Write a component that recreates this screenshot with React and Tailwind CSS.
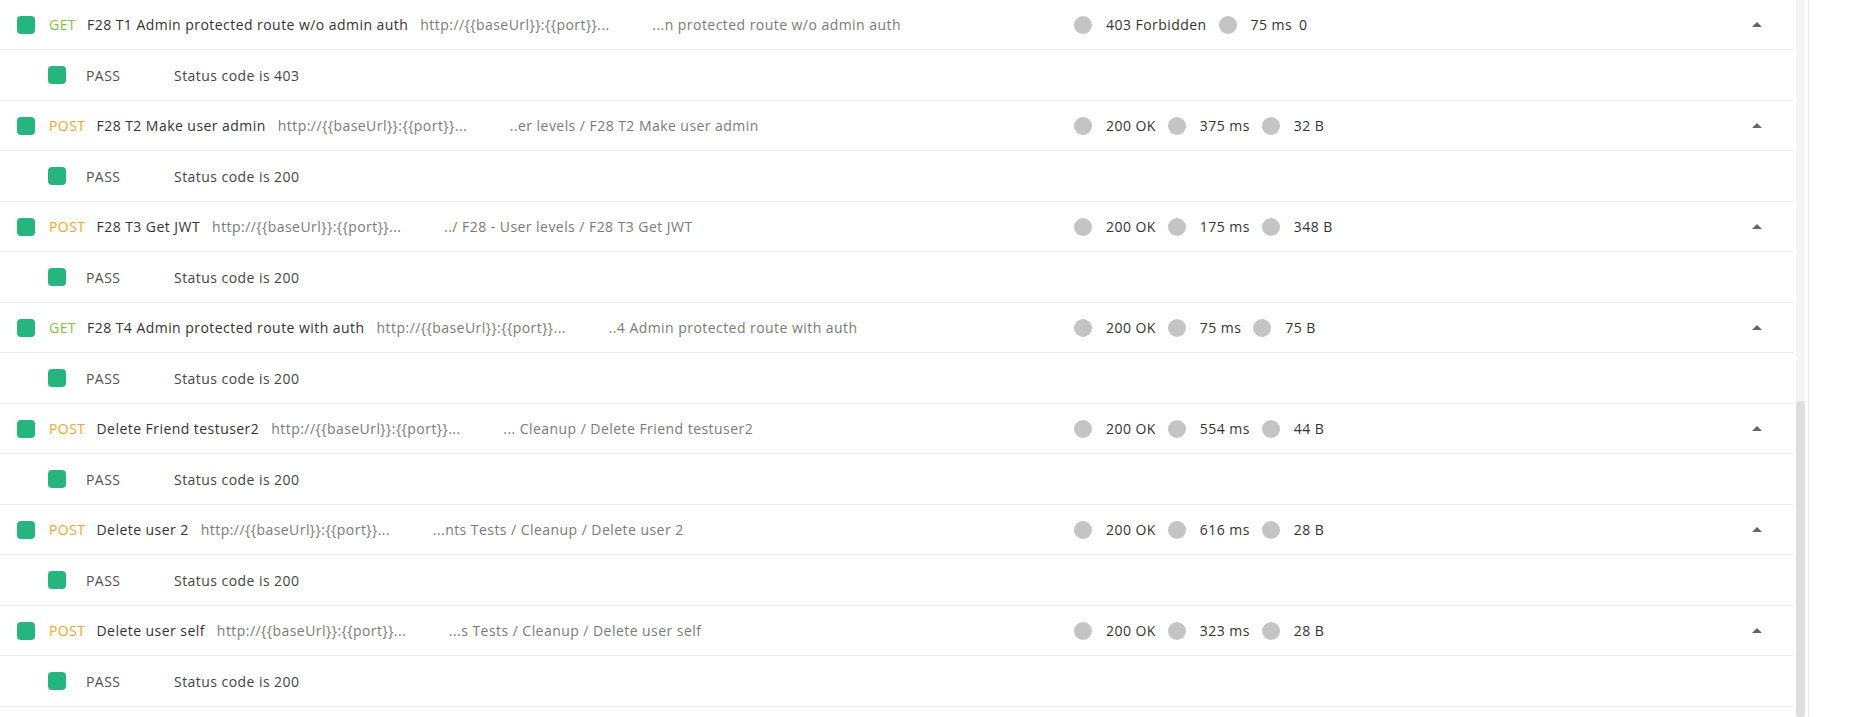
import React from "react";

const rows = [
  { m: "GET", name: "F28 T1 Admin protected route w/o admin auth", path: "...n protected route w/o admin auth", meta: ["403 Forbidden", "75 ms"], extra: "0", test: "Status code is 403" },
  { m: "POST", name: "F28 T2 Make user admin", path: "..er levels / F28 T2 Make user admin", meta: ["200 OK", "375 ms", "32 B"], test: "Status code is 200" },
  { m: "POST", name: "F28 T3 Get JWT", path: "../ F28 - User levels / F28 T3 Get JWT", meta: ["200 OK", "175 ms", "348 B"], test: "Status code is 200" },
  { m: "GET", name: "F28 T4 Admin protected route with auth", path: "..4 Admin protected route with auth", meta: ["200 OK", "75 ms", "75 B"], test: "Status code is 200" },
  { m: "POST", name: "Delete Friend testuser2", path: "... Cleanup / Delete Friend testuser2", meta: ["200 OK", "554 ms", "44 B"], test: "Status code is 200" },
  { m: "POST", name: "Delete user 2", path: "...nts Tests / Cleanup / Delete user 2", meta: ["200 OK", "616 ms", "28 B"], test: "Status code is 200" },
  { m: "POST", name: "Delete user self", path: "...s Tests / Cleanup / Delete user self", meta: ["200 OK", "323 ms", "28 B"], test: "Status code is 200" },
];

function Row({ r }) {
  return (
    <>
      <div className="flex h-[50px] items-center border-b border-[#ebebeb]">
        <div className="flex min-w-0 flex-1 items-center whitespace-nowrap">
          <span className="ml-[17px] h-[18px] w-[18px] shrink-0 rounded-[4px] bg-[#26b47f]" />
          <span className={"ml-[14px] " + (r.m === "GET" ? "text-[#7cc63c]" : "text-[#f5a623]")}>{r.m}</span>
          <span className="ml-[11px] text-[#333333]">{r.name}</span>
          <span className="ml-[12px] w-[232px] shrink-0 overflow-hidden text-[#7a7a7a]">http://{"{{baseUrl}}"}:{"{{port}}"}...</span>
          <span className="text-[#7a7a7a]">{r.path}</span>
        </div>
        <div className="flex w-[719px] shrink-0 items-center whitespace-nowrap text-[#333333]">
          {r.meta.map((t, i) => (
            <div key={i} className="mr-[12px] flex items-center">
              <span className="h-[18px] w-[18px] rounded-full bg-[#c4c4c4]" />
              <span className="ml-[14px]">{t}</span>
            </div>
          ))}
          {r.extra && <span className="-ml-[5px]">{r.extra}</span>}
          <svg className="ml-auto mr-[31px]" width="10" height="5" viewBox="0 0 10 5">
            <path d="M0 5 L5 0 L10 5 Z" fill="#666666" />
          </svg>
        </div>
      </div>
      <div className="flex h-[51px] items-center border-b border-[#ebebeb] whitespace-nowrap">
        <span className="ml-[48px] h-[18px] w-[18px] shrink-0 rounded-[4px] bg-[#26b47f]" />
        <span className="ml-[20px] w-[88px] text-[#505050]">PASS</span>
        <span className="text-[#444444]">{r.test}</span>
      </div>
    </>
  );
}

export default function App() {
  return (
    <div
      className="flex h-[717px] w-[1859px] overflow-hidden bg-white text-[14px] tracking-[0.45px]"
      style={{ fontFamily: '"Open Sans", "Noto Sans", sans-serif' }}
    >
      <div className="flex w-[1793px] shrink-0 flex-col">
        {rows.map((r, i) => (
          <Row key={i} r={r} />
        ))}
      </div>
      <div className="ml-[3px] flex h-full w-[9px] shrink-0 flex-col bg-[#f5f5f5]">
        <div className="h-[401px] shrink-0" />
        <div className="flex-1 rounded-[4px] bg-[#dedede]" />
      </div>
      <div className="ml-[3px] h-full w-px shrink-0 bg-[#eaeaea]" />
      <div className="flex-1" />
    </div>
  );
}
